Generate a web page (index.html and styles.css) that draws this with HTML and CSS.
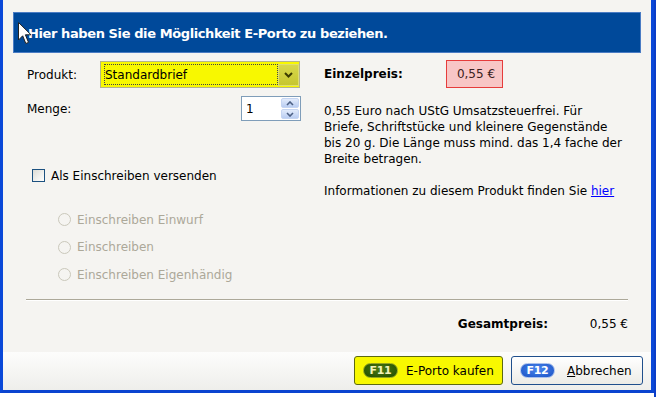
FILE: index.html
```html
<!DOCTYPE html>
<html lang="de">
<head>
<meta charset="utf-8">
<title>E-Porto</title>
<link rel="stylesheet" href="styles.css">
</head>
<body>
<div class="screen">
  <div class="window">
    <div class="content">
      <div class="banner">Hier haben Sie die Möglichkeit E-Porto zu beziehen.</div>
      <div class="form">
        <div class="left">
          <div class="row row-product">
            <span class="label">Produkt:</span>
            <div class="combo">
              <div class="combo-text">Standardbrief</div>
              <div class="combo-btn">
                <svg width="9" height="6" viewBox="0 0 9 6"><path d="M1 1 L4.5 4.5 L8 1" fill="none" stroke="#3c3c00" stroke-width="2"/></svg>
              </div>
            </div>
          </div>
          <div class="row row-qty">
            <span class="label">Menge:</span>
            <div class="spin">
              <span class="spin-val">1</span>
              <div class="spin-btns">
                <div class="spin-btn"><svg width="8" height="5" viewBox="0 0 8 5"><path d="M1 4 L4 1 L7 4" fill="none" stroke="#4d6185" stroke-width="1.6"/></svg></div>
                <div class="spin-btn"><svg width="8" height="5" viewBox="0 0 8 5"><path d="M1 1 L4 4 L7 1" fill="none" stroke="#4d6185" stroke-width="1.6"/></svg></div>
              </div>
            </div>
          </div>
          <div class="check">
            <span class="checkbox"></span>
            <span>Als Einschreiben versenden</span>
          </div>
          <div class="radios">
            <div class="radio-row"><span class="radio"></span><span>Einschreiben Einwurf</span></div>
            <div class="radio-row"><span class="radio"></span><span>Einschreiben</span></div>
            <div class="radio-row"><span class="radio"></span><span>Einschreiben Eigenhändig</span></div>
          </div>
        </div>
        <div class="right">
          <div class="price-row">
            <span class="bold price-label">Einzelpreis:</span>
            <div class="price">0,55 €</div>
          </div>
          <p class="desc">0,55 Euro nach UStG Umsatzsteuerfrei. Für<br>Briefe, Schriftstücke und kleinere Gegenstände<br>bis 20 g. Die Länge muss mind. das 1,4 fache der<br>Breite betragen.</p>
          <p class="info">Informationen zu diesem Produkt finden Sie <a href="#" class="link">hier</a></p>
        </div>
      </div>
      <div class="sep"></div>
      <div class="total">
        <span class="bold">Gesamtpreis:</span>
        <span class="total-val">0,55 €</span>
      </div>
    </div>
    <div class="footer">
      <div class="btn btn-buy"><span class="badge badge-green">F11</span><span>E-Porto kaufen</span></div>
      <div class="btn btn-cancel"><span class="badge badge-blue">F12</span><span><u>A</u>bbrechen</span></div>
    </div>
  </div>
  <svg class="cursor" width="14" height="23" viewBox="0 0 14 23">
    <path d="M0.5 0.5 L0.5 18 L4.7 13.8 L7.8 21.5 L10.5 20.4 L7.4 12.8 L13 12.8 Z" fill="#fff" stroke="#222" stroke-width="1" stroke-linejoin="round"/>
  </svg>
</div>
</body>
</html>
```
FILE: styles.css
```css
* { box-sizing: border-box; }
html, body { margin: 0; padding: 0; }
body {
  width: 656px;
  height: 397px;
  overflow: hidden;
  background: #ffffff;
  font-family: "DejaVu Sans", "Noto Sans", sans-serif;
  font-size: 12px;
  color: #000;
}
.screen {
  position: relative;
  width: 656px;
  height: 397px;
  background: linear-gradient(to right, #ffffff 654px, #0b3ec8 654px);
}
.window {
  width: 654px;
  height: 393px;
  border-left: 3px solid #0a48d8;
  border-right: 3px solid #0a48d8;
  border-bottom: 3px solid #0a44d0;
  background: #f5f4f1;
  display: flex;
  flex-direction: column;
}
.content {
  height: 352px;
  padding-top: 12px;
}
.banner {
  margin: 0 10px;
  height: 41px;
  background: #00499a;
  border: 1px solid #4a7cc4;
  color: #fff;
  font-weight: bold;
  font-size: 13px;
  letter-spacing: -0.4px;
  display: flex;
  align-items: center;
  padding-left: 14px;
  padding-top: 1px;
}
.form {
  display: flex;
  margin-top: 7px;
  padding-left: 23px;
}
.left {
  width: 275px;
  display: flex;
  flex-direction: column;
}
.row {
  display: flex;
  align-items: center;
}
.label { width: 74px; padding-left: 1px; }
.row-product { height: 27px; margin-top: 1px; }
.row-qty { height: 25px; margin-top: 8px; justify-content: space-between; }
.combo {
  width: 200px;
  height: 27px;
  border: 1px solid #b4b48c;
  background: #f8f800;
  display: flex;
  padding: 2px 0 2px 3px;
}
.combo-text {
  flex: 1;
  border: 1px dotted #444;
  display: flex;
  align-items: center;
  padding-left: 0;
}
.combo-btn {
  width: 21px;
  margin-bottom: -1px;
  background: linear-gradient(#d8d84a, #c6c630);
  border: 1px solid #dede70;
  display: flex;
  align-items: center;
  justify-content: center;
}
.spin {
  width: 60px;
  height: 25px;
  border: 1px solid #7f9db9;
  background: #fff;
  display: flex;
  align-items: center;
  padding: 1px 1px 1px 4px;
}
.spin-val { flex: 1; }
.spin-btns {
  width: 18px;
  height: 100%;
  display: flex;
  flex-direction: column;
  gap: 1px;
}
.spin-btn {
  flex: 1;
  border-radius: 2px;
  background: linear-gradient(#e2ebfb, #b9cdf2);
  border: 1px solid #c5d5f2;
  display: flex;
  align-items: center;
  justify-content: center;
}
.check {
  display: flex;
  align-items: center;
  margin-top: 47px;
  margin-left: 6px;
  gap: 6px;
  height: 15px;
}
.checkbox {
  width: 13px;
  height: 13px;
  border: 1px solid #1c5180;
  background: linear-gradient(135deg, #dcdcd6, #ffffff);
}
.radios {
  margin-top: 23px;
  margin-left: 32px;
  color: #aca899;
}
.radio-row {
  display: flex;
  align-items: center;
  height: 27.5px;
  gap: 6px;
}
.radio {
  width: 13px;
  height: 13px;
  border-radius: 50%;
  border: 1px solid #cac8bb;
  background: #f5f4f1;
}
.right {
  margin-left: 23px;
  width: 310px;
}
.price-row {
  display: flex;
  align-items: center;
  height: 28px;
}
.bold { font-weight: bold; }
.price-label { width: 122px; }
.price {
  width: 57px;
  height: 28px;
  background: #f8c6c6;
  border: 1px solid #e63c3c;
  display: flex;
  align-items: center;
  justify-content: center;
  padding-left: 3px;
  color: #3a2020;
}
.desc {
  margin: 15px 0 0 0;
  line-height: 16px;
}
.info {
  margin: 16px 0 0 0;
  line-height: 16px;
}
.link { color: #0000ff; text-decoration: underline; }
.sep {
  margin: 10px 23px 0 23px;
  height: 2px;
  border-top: 1px solid #aca899;
  border-bottom: 1px solid #ffffff;
}
.total {
  display: flex;
  align-items: center;
  justify-content: flex-end;
  height: 46px;
  margin-right: 23px;
}
.total-val { width: 80px; text-align: right; }
.footer {
  flex: 1;
  background: linear-gradient(#fdfdfc, #eeeeeb);
  display: flex;
  justify-content: flex-end;
  align-items: flex-start;
  gap: 8px;
  padding: 4px 8px 0 0;
}
.btn {
  height: 29px;
  border-radius: 3px;
  display: flex;
  align-items: center;
  gap: 8px;
  padding-left: 8px;
}
.btn-buy {
  width: 149px;
  background: #f8f800;
  border: 1px solid #5d6a10;
}
.btn-cancel {
  width: 132px;
  background: linear-gradient(#ffffff, #ecebe6);
  border: 1px solid #1f4f8c;
  gap: 12px;
}
.badge {
  height: 15px;
  width: 35px;
  border-radius: 8px;
  font-weight: bold;
  font-size: 11px;
  display: flex;
  align-items: center;
  justify-content: center;
  letter-spacing: -0.3px;
}
.badge-green {
  background: radial-gradient(ellipse at 50% 40%, #4c7c12, #1f4a00);
  border: 1px solid #94a620;
  color: #f2f2b8;
}
.badge-blue {
  background: radial-gradient(ellipse at 50% 40%, #4a86ee, #1a52c4);
  border: 1px solid #a9c0ec;
  color: #ffffff;
}
.cursor {
  position: absolute;
  left: 18px;
  top: 22px;
}
```
